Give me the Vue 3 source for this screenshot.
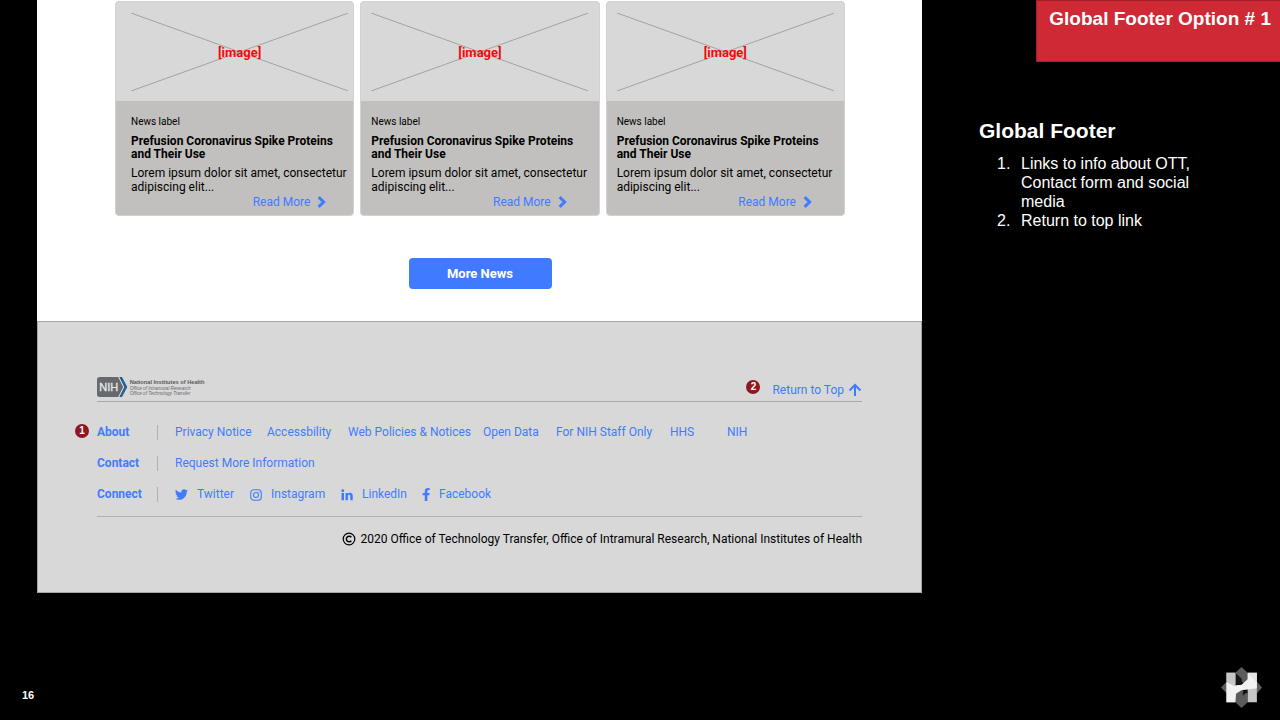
<script setup>
const cards = [1, 2, 3]

const siteLinks = [
  'Privacy Notice',
  'Accessbility',
  'Web Policies & Notices',
  'Open Data',
  'For NIH Staff Only',
  'HHS',
  'NIH',
]
</script>

<template>
  <div class="slide">
    <main class="mock">
      <section class="news">
        <div class="cards">
          <article v-for="card in cards" :key="card" class="card">
            <div class="thumb">
              <svg class="cross" viewBox="0 0 218 78" preserveAspectRatio="none" aria-hidden="true">
                <path d="M0 0L218 78M0 78L218 0" />
              </svg>
              <span class="thumb-label">[image]</span>
            </div>
            <div class="card-body">
              <p class="label">News label</p>
              <h3>Prefusion Coronavirus Spike Proteins and Their Use</h3>
              <p class="excerpt">Lorem ipsum dolor sit amet, consectetur adipiscing elit...</p>
              <a class="read-more" href="#">
                Read More
                <svg width="9" height="12" viewBox="0 0 9 12" aria-hidden="true">
                  <path d="M1.6 1.2L6.6 6L1.6 10.8" />
                </svg>
              </a>
            </div>
          </article>
        </div>
        <button class="more" type="button">More News</button>
      </section>

      <footer class="footer">
        <div class="footer-top">
          <svg class="nih" width="108" height="20" viewBox="0 0 324 60" role="img" aria-label="National Institutes of Health">
            <path d="M8 0H66L81 30L66 60H8Q0 60 0 52V8Q0 0 8 0Z" fill="#67696d" />
            <path d="M66 0H75L91 30L75 60H66L81 30Z" fill="#2b6294" />
            <path d="M65 0L80 30L65 60" fill="none" stroke="#e6e6e6" stroke-width="3" />
            <text x="7" y="42" font-size="33" fill="#e8e8e8" stroke="#e8e8e8" stroke-width="1">NIH</text>
            <text x="98" y="21" font-size="17" font-weight="700" fill="#58595b">National Institutes of Health</text>
            <text x="98" y="38" font-size="14" font-style="italic" fill="#67696d">Office of Intramural Research</text>
            <text x="98" y="55" font-size="14" font-style="italic" fill="#67696d">Office of Technology Transfer</text>
          </svg>
          <div class="top-link">
            <span class="badge">2</span>
            <a href="#">
              Return to Top
              <svg width="14" height="14" viewBox="0 0 14 14" aria-hidden="true">
                <path d="M7 13V2M1.5 7.5L7 2L12.5 7.5" />
              </svg>
            </a>
          </div>
        </div>

        <div class="rows">
          <span class="badge badge-rows">1</span>
          <div class="row">
            <strong>About</strong>
            <nav class="site-links">
              <a v-for="link in siteLinks" :key="link" href="#">{{ link }}</a>
            </nav>
          </div>
          <div class="row">
            <strong>Contact</strong>
            <nav><a href="#">Request More Information</a></nav>
          </div>
          <div class="row">
            <strong>Connect</strong>
            <nav class="social">
              <a href="#">
                <svg width="13" height="13" viewBox="0 0 24 24" aria-hidden="true">
                  <path fill="currentColor" d="M23.95 4.57a10 10 0 0 1-2.82.78 4.96 4.96 0 0 0 2.16-2.73c-.95.56-2 .96-3.13 1.19a4.92 4.92 0 0 0-8.38 4.48C7.69 8.1 4.07 6.13 1.64 3.16a4.92 4.92 0 0 0 1.52 6.57 4.9 4.9 0 0 1-2.23-.61v.06a4.92 4.92 0 0 0 3.95 4.83 5 5 0 0 1-2.21.08 4.94 4.94 0 0 0 4.6 3.42A9.87 9.87 0 0 1 0 19.54a14 14 0 0 0 7.55 2.21c9.05 0 14-7.5 14-13.98l-.02-.64a10 10 0 0 0 2.42-2.56z" />
                </svg>
                Twitter
              </a>
              <a href="#">
                <svg width="12" height="12" viewBox="0 0 24 24" fill="none" stroke="currentColor" stroke-width="2.2" aria-hidden="true">
                  <rect x="1.5" y="1.5" width="21" height="21" rx="6" />
                  <circle cx="12" cy="12" r="5" />
                  <circle cx="18" cy="6" r="1" fill="currentColor" stroke="none" />
                </svg>
                Instagram
              </a>
              <a href="#">
                <svg width="12" height="12" viewBox="0 0 24 24" fill="currentColor" aria-hidden="true">
                  <circle cx="3.5" cy="3.5" r="2.8" />
                  <path d="M1 8h5v14.500H1zM9 8h4.700v2c.8-1.400 2.500-2.400 4.600-2.400 4 0 5.200 2.600 5.200 6.500v8.400h-5v-7.400c0-2-.2-3.600-2.200-3.600s-2.400 1.500-2.400 3.500v7.500H9z" />
                </svg>
                LinkedIn
              </a>
              <a href="#">
                <svg width="8" height="13" viewBox="0 0 14 24" fill="currentColor" aria-hidden="true">
                  <path d="M13 13.500l.7-4.400H9.500V6.300c0-1.200.6-2.400 2.500-2.400h1.900V.3S12.200 0 10.500 0C7 0 4.700 2.100 4.700 5.900v3.200H.8v4.400h3.900V24h4.800V13.500z" />
                </svg>
                Facebook
              </a>
            </nav>
          </div>
        </div>

        <p class="copyright">
          <svg width="14" height="14" viewBox="0 0 14 14" fill="none" stroke="#000" aria-hidden="true">
            <circle cx="7" cy="7" r="5.800" stroke-width="1.200" />
            <path d="M9.300 5.200A2.800 2.800 0 1 0 9.300 8.800" stroke-width="1.500" />
          </svg>
          2020 Office of Technology Transfer, Office of Intramural Research, National Institutes of Health
        </p>
      </footer>
    </main>

    <aside class="notes">
      <h1>Global Footer Option # 1</h1>
      <h2>Global Footer</h2>
      <ol>
        <li>Links to info about OTT, Contact form and social media</li>
        <li>Return to top link</li>
      </ol>
    </aside>

    <div class="slide-foot">
      <span>16</span>
      <svg width="41" height="41" viewBox="0 0 120 120" role="img" aria-label="Logo">
        <path d="M60 0L78 17V40L70 48L60 44L60 36L42 44V17ZM60 120L42 103V78L60 66L78 78V103ZM0 60L18 42V78ZM120 60L104 42V78Z" fill="#5c5c5c" />
        <path d="M42 17L60 34V50L42 52ZM78 66L64 72V84L78 72Z" fill="#161616" />
        <path d="M16 17H42V103H16ZM78 17H105V103H78Z" fill="#c6c6c6" />
        <path d="M16 44L36 54L60 52L78 36V17L105 44V62L78 66L60 68L44 78L42 103H16Z" fill="#f2f2f2" />
        <path d="M16 17H42V56L16 42Z" fill="#c6c6c6" />
        <path d="M78 17H105V44Z" fill="#e4e4e4" />
      </svg>
    </div>
  </div>
</template>

<style>
body {
  margin: 0;
  background: #000;
}
</style>

<style scoped>
.slide {
  box-sizing: border-box;
  min-height: 100vh;
  padding-left: 37px;
  display: grid;
  grid-template-columns: 885fr 358fr;
  grid-template-rows: auto 1fr;
  background: #000;
  color: #000;
  font-family: Roboto, "Liberation Sans", sans-serif;
  font-size: 12px;
  line-height: 14px;
}

h1,
h2,
h3,
p,
ol {
  margin: 0;
}

a {
  color: #407bff;
  text-decoration: none;
}

.news {
  display: flex;
  flex-direction: column;
  align-items: center;
  gap: 42px;
  padding: 1px 77px 32px 78px;
  background: #fff;
}

.cards {
  width: 100%;
  display: grid;
  grid-template-columns: repeat(3, 1fr);
  gap: 6px;
}

.card {
  --inset-left: 10px;
  --inset-right: 10px;
  box-sizing: border-box;
  border: 1px solid #d2d2d2;
  border-radius: 4px;
  background: #c2c0be;
  overflow: hidden;
}

.card:first-child {
  --inset-left: 15px;
  --inset-right: 5px;
}

.thumb {
  display: grid;
  height: 99px;
  padding: 0 var(--inset-right) 0 var(--inset-left);
  place-items: center;
  background: #d8d8d8;
}

.cross,
.thumb-label {
  grid-area: 1 / 1;
}

.cross {
  width: 100%;
  height: 78px;
}

.cross path {
  fill: none;
  stroke: #a3a3a3;
}

.thumb-label {
  padding-top: 2px;
  color: #f80808;
  font-size: 13px;
  font-weight: 700;
}

.card-body {
  display: flex;
  flex-direction: column;
  padding: 14px var(--inset-right) 6px var(--inset-left);
}

.label {
  font-size: 10px;
}

.card h3 {
  margin: 6px 0 5px;
  font-size: 12px;
  line-height: 13px;
}

.read-more {
  display: flex;
  align-items: center;
  align-self: flex-end;
  gap: 7px;
  margin: 1px 22px 0 0;
}

.read-more path,
.top-link path {
  fill: none;
  stroke: #407bff;
  stroke-width: 3;
}

.more {
  width: 143px;
  height: 31px;
  border: 0;
  border-radius: 4px;
  background: #407bff;
  color: #fff;
  font: 700 13px/16px Roboto, "Liberation Sans", sans-serif;
}

.footer {
  padding: 55px 59px 46px;
  border: 1px solid #a6a6a6;
  background: #d8d8d8;
}

.footer-top {
  display: flex;
  justify-content: space-between;
  align-items: flex-start;
  padding-bottom: 4px;
  border-bottom: 1px solid #a9a9a9;
}

.nih {
  font-family: "Liberation Sans", Arial, sans-serif;
}

.top-link {
  display: flex;
  align-items: flex-start;
  gap: 12px;
  padding-top: 3px;
}

.top-link a {
  display: flex;
  align-items: center;
  gap: 4px;
  padding-top: 3px;
}

.top-link path {
  stroke-width: 2;
}

.badge {
  width: 14px;
  height: 14px;
  border-radius: 50%;
  background: #8f171f;
  color: #fff;
  font: 700 10px/14px "Liberation Sans", Arial, sans-serif;
  text-align: center;
}

.badge-rows {
  position: absolute;
  left: -22px;
  top: 22px;
}

.rows {
  position: relative;
  display: flex;
  flex-direction: column;
  gap: 16px;
  padding: 23px 0 14px;
  border-bottom: 1px solid #b0b0b0;
}

.row {
  display: grid;
  grid-template-columns: 60px 1fr;
  align-items: center;
  line-height: 15px;
}

.row strong {
  color: #407bff;
}

.row nav {
  padding-left: 17px;
  border-left: 1px solid #b0b0b0;
  white-space: nowrap;
}

.row .site-links {
  display: grid;
  grid-template-columns: 92px 81px 135px 73px 114px 57px auto;
}

.row .social {
  display: grid;
  grid-template-columns: 75px 91px 81px auto;
}

.social a {
  display: flex;
  align-items: center;
  gap: 9px;
}

.copyright {
  display: flex;
  align-items: center;
  justify-content: flex-end;
  gap: 5px;
  padding-top: 15px;
}

.notes {
  display: flex;
  flex-direction: column;
  color: #fff;
  font-family: "Liberation Sans", Arial, sans-serif;
}

.notes h1 {
  box-sizing: border-box;
  align-self: flex-end;
  min-height: 62px;
  padding: 7px 9px 0 12px;
  border: 1px solid #9c1f2b;
  border-right: 0;
  background: #d02936;
  font-size: 19px;
  line-height: 21px;
}

.notes h2 {
  margin: 56px 0 0 57px;
  font-size: 21px;
  line-height: 25px;
}

.notes ol {
  margin: 11px 66px 0 75px;
  padding: 0;
  list-style: none;
  counter-reset: note;
  font-size: 16px;
  line-height: 19px;
}

.notes li {
  display: grid;
  grid-template-columns: 24px 1fr;
  counter-increment: note;
}

.notes li::before {
  content: counter(note) ".";
}

.slide-foot {
  grid-column: 1 / -1;
  align-self: end;
  display: flex;
  justify-content: space-between;
  align-items: flex-end;
  margin-left: -15px;
  padding: 0 18px 12px 0;
  color: #fff;
  font: 700 11px/26px "Liberation Sans", Arial, sans-serif;
}
</style>
